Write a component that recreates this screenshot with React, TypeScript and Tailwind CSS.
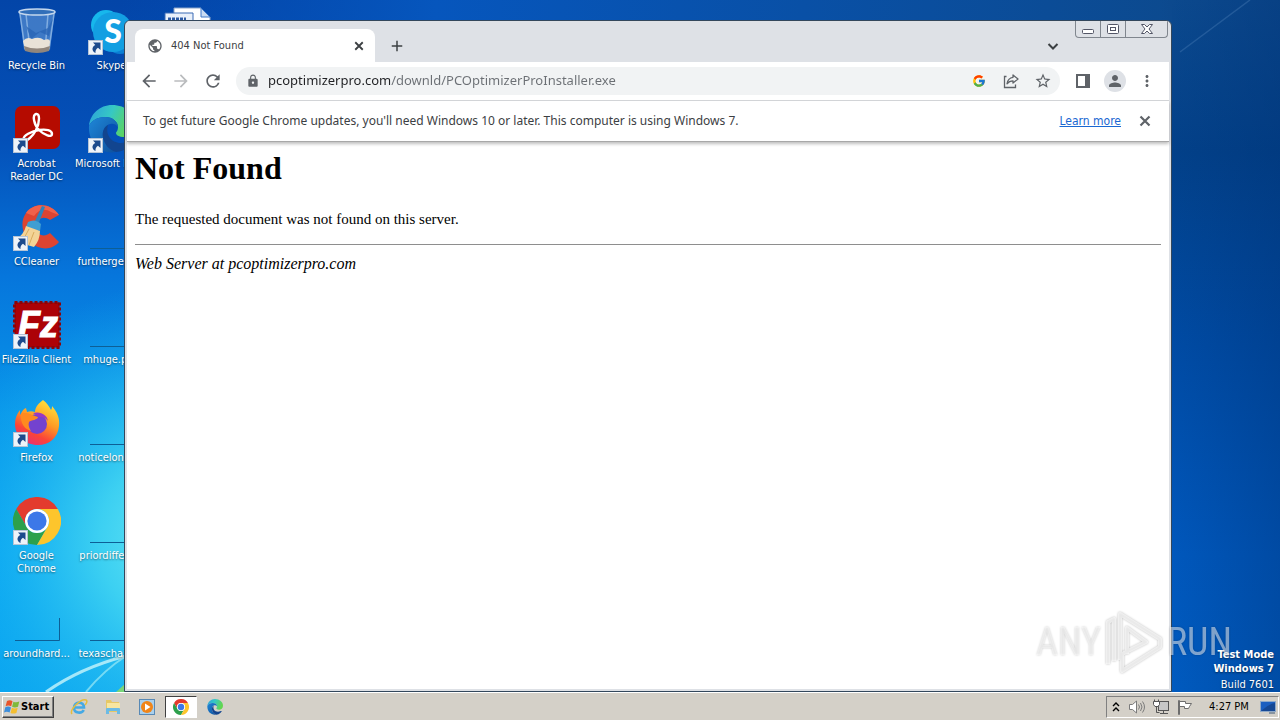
import { FunctionComponent, ReactNode, useState } from 'react';
import {
  MdAdd,
  MdArrowBack,
  MdArrowForward,
  MdLock,
  MdMoreVert,
  MdPerson,
  MdPublic,
  MdRefresh,
  MdStarBorder,
} from 'react-icons/md';
import { FcGoogle } from 'react-icons/fc';

type IconProps = { className?: string };

const CloseIcon: FunctionComponent<IconProps> = ({ className }) => (
  <svg viewBox="0 0 12 12" className={className} fill="none" stroke="currentColor" strokeWidth="2.2" aria-hidden="true">
    <path d="M1.500 1.500l9 9M10.500 1.500l-9 9" />
  </svg>
);

const ChromeLogo: FunctionComponent<IconProps> = ({ className }) => (
  <svg viewBox="0 0 48 48" className={className} aria-hidden="true">
    <path d="M24 12H44.8A24 24 0 0 0 3.2 12L13.6 30A12 12 0 0 1 24 12Z" fill="#e33b2e" />
    <path d="M13.6 30L3.2 12A24 24 0 0 0 24 48L34.4 30A12 12 0 0 1 13.6 30Z" fill="#2da04c" />
    <path d="M34.4 30L24 48A24 24 0 0 0 44.8 12H24A12 12 0 0 1 34.4 30Z" fill="#fdc52c" />
    <circle cx="24" cy="24" r="12" fill="#fff" />
    <circle cx="24" cy="24" r="9.6" fill="#3c78e8" />
  </svg>
);

const EdgeLogo: FunctionComponent<IconProps> = ({ className }) => (
  <svg viewBox="0 0 48 48" className={className} aria-hidden="true">
    <defs>
      <linearGradient id="edgeTop" x1="0" y1="0" x2="1" y2="0.3">
        <stop offset="0" stopColor="#2b9fdc" />
        <stop offset="0.5" stopColor="#36c8c4" />
        <stop offset="1" stopColor="#62d650" />
      </linearGradient>
      <linearGradient id="edgeBody" x1="0" y1="0" x2="1" y2="1">
        <stop offset="0" stopColor="#1f87d8" />
        <stop offset="1" stopColor="#0d4f9c" />
      </linearGradient>
    </defs>
    <path d="M1 21C2 9 12 0 24 0c14 0 24 9 24 20 0 8-6 12-12 12-5 0-8-2-8-4 0-1 2-2 2-6 0-5-5-10-13-10C9 12 3 16 1 21Z" fill="url(#edgeTop)" />
    <path d="M1 21c2-5 8-9 16-9 8 0 13 5 13 10-2-3-5-4-8-3-5 1-8 7-7 13 1 7 7 13 13 15C13 50 0 38 1 21Z" fill="url(#edgeBody)" />
    <path d="M15 32c-1-5 1-10 5-12-3 9 3 18 13 18 6 0 10-3 11-2 1 1-6 11-16 11-7-2-12-8-13-15Z" fill="#12458f" />
  </svg>
);

const RecycleBin: FunctionComponent<IconProps> = ({ className }) => (
  <svg viewBox="0 0 48 48" className={className} aria-hidden="true">
    <path d="M6 4L11 43Q24 48 37 43L42 4Z" fill="#5289cf" fillOpacity=".75" />
    <path d="M7 7L12 42M13 7l4 36M41 7l-5 35M35 7l-3 37" stroke="#9ec4ec" strokeWidth="1.5" opacity=".7" />
    <path d="M13 19l10 7 12-5 5-10-4 18-9-4-9 7Z" fill="#2864b4" opacity=".75" />
    <path d="M10 34q4-5 9-2 7-3 12 1 6-2 6 2l-1 7q-11 5-24 0Z" fill="#e9e2d7" />
    <path d="M11 39q13 5 26 0l-1 5q-12 4-24 0Z" fill="#91867c" />
    <ellipse cx="24" cy="5" rx="18" ry="3" fill="#326fb9" stroke="#c4d7ed" strokeWidth="1.5" />
  </svg>
);

const SkypeLogo: FunctionComponent<IconProps> = ({ className }) => (
  <svg viewBox="0 0 48 48" className={className} aria-hidden="true">
    <circle cx="18" cy="18" r="15" fill="#17b7ec" />
    <circle cx="32" cy="33" r="14" fill="#0b7fd4" />
    <circle cx="25" cy="25" r="20" fill="#139fe2" />
    <text x="25" y="36" textAnchor="middle" fill="#fff" fontFamily="Lato, sans-serif" fontWeight="900" fontSize="32">
      S
    </text>
  </svg>
);

const AcrobatLogo: FunctionComponent<IconProps> = ({ className }) => (
  <svg viewBox="0 0 48 48" className={className} aria-hidden="true">
    <rect x="2" y="1" width="45" height="43" rx="7" fill="#b50b00" />
    <path
      d="M11 34c-2-3 8-8 15-9 7-1 13 0 13 4 0 4-8 1-13-4-5-5-7-15-3-16 4-1 4 8 0 16-3 6-10 13-12 9Z"
      fill="none"
      stroke="#fff"
      strokeWidth="2.4"
      strokeLinejoin="round"
    />
  </svg>
);

const CCleanerLogo: FunctionComponent<IconProps> = ({ className }) => (
  <svg viewBox="0 0 48 48" className={className} aria-hidden="true">
    <path d="M46 12C38 0 21-1 13 10 5 21 11 39 25 44c8 3 16 1 21-5l-9-9c-6 5-14 2-14-6 0-8 7-12 14-7Z" fill="#dd4431" />
    <path d="M46 12C38 0 21-1 13 10l8 3c5-7 11-8 17-4Z" fill="#f0614a" />
    <path d="M29 3l3 1-7 18-4-2Z" fill="#2d83bd" />
    <path d="M15 19q7-4 13 2l-1 7-14-4Z" fill="#3f9ed2" />
    <path d="M13 23l14 5q0 9-6 16L1 38Q11 32 13 23Z" fill="#f3d396" />
    <path d="M16 26L9 39M21 29l-5 13" stroke="#d9ab5e" strokeWidth="1" />
  </svg>
);

const FileZillaLogo: FunctionComponent<IconProps> = ({ className }) => (
  <svg viewBox="0 0 48 48" className={className} aria-hidden="true">
    <rect x="1.5" y="1.5" width="45" height="45" fill="#ac0207" stroke="#8c0307" strokeWidth="3" strokeDasharray="3 2" />
    <text x="5" y="36" fill="#fff" stroke="#fff" fontFamily="Liberation Sans, sans-serif" fontWeight="700" fontStyle="italic" fontSize="36">
      Fz
    </text>
  </svg>
);

const FirefoxLogo: FunctionComponent<IconProps> = ({ className }) => (
  <svg viewBox="0 0 48 48" className={className} aria-hidden="true">
    <defs>
      <linearGradient id="fox" x1=".8" y1="0" x2=".3" y2="1">
        <stop offset="0" stopColor="#ffe83d" />
        <stop offset=".45" stopColor="#ff9a24" />
        <stop offset=".75" stopColor="#fb4438" />
        <stop offset="1" stopColor="#e62f76" />
      </linearGradient>
    </defs>
    <path d="M30 1c4 3 6 6 8 10 1-1 1-3 1-4 5 6 8 12 7 20C45 39 36 46 25 46 12 46 2 37 2 25c0-6 2-10 5-14v5c2-3 3-6 6-7l1 4c3-1 5-1 8 0 0-5 4-9 8-12Z" fill="url(#fox)" />
    <circle cx="24" cy="25" r="10" fill="#7342cf" />
    <path d="M20 14c8-2 14 2 15 8-3-4-6-4-9-4Z" fill="#9a37c4" />
    <path d="M8 15c4-2 8-1 11 1l6 2c0 3-7 3-9 5-1 3 0 6 2 9-6-2-11-7-10-17Z" fill="#ff8a1f" />
  </svg>
);

const BlankFile: FunctionComponent<IconProps> = ({ className }) => (
  <svg viewBox="0 0 48 48" className={className} aria-hidden="true">
    <path d="M2 45.500H46.500V23" fill="none" stroke="#0d5f96" strokeWidth="1" />
  </svg>
);

const WordFile: FunctionComponent<IconProps> = ({ className }) => (
  <svg viewBox="0 0 48 48" className={className} aria-hidden="true">
    <path d="M11 1h27l9 9v36H11Z" fill="#fff" stroke="#8aa4c8" />
    <path d="M38 1v9h9Z" fill="#c9dbf2" stroke="#3f79c9" />
    <path d="M2 6h28v16H2Z" fill="#e9f0fa" stroke="#3a6bb5" />
    <path d="M5 12h18" stroke="#2c5aa5" strokeWidth="3" strokeDasharray="3 1" />
  </svg>
);

const ShortcutArrow = () => (
  <svg viewBox="0 0 15 15" className="absolute bottom-0 left-0 size-[15px]" aria-hidden="true">
    <rect x=".5" y=".5" width="14" height="14" fill="#eef3f9" stroke="#b5c4d6" />
    <path d="M5 2.500h7.500V10L10 7.700C8 9 7.300 10.500 7.500 13 3.500 11 3.500 7 7.300 5Z" fill="#1c4a8c" />
  </svg>
);

type Shortcut = {
  label: string;
  icon: FunctionComponent<IconProps>;
  shortcut?: boolean;
};

const DESKTOP_ITEMS: Shortcut[] = [
  { label: 'Recycle Bin', icon: RecycleBin },
  { label: 'Acrobat\nReader DC', icon: AcrobatLogo, shortcut: true },
  { label: 'CCleaner', icon: CCleanerLogo, shortcut: true },
  { label: 'FileZilla Client', icon: FileZillaLogo, shortcut: true },
  { label: 'Firefox', icon: FirefoxLogo, shortcut: true },
  { label: 'Google\nChrome', icon: ChromeLogo, shortcut: true },
  { label: 'aroundhard...', icon: BlankFile },
  { label: 'Skype', icon: SkypeLogo, shortcut: true },
  { label: 'Microsoft Edge', icon: EdgeLogo, shortcut: true },
  { label: 'furthergene...', icon: BlankFile },
  { label: 'mhuge.png', icon: BlankFile },
  { label: 'noticelongs...', icon: BlankFile },
  { label: 'priordiffere...', icon: BlankFile },
  { label: 'texaschairs...', icon: BlankFile },
  { label: '', icon: WordFile },
];

const Wallpaper = () => (
  <svg viewBox="0 0 1280 692" preserveAspectRatio="none" className="absolute inset-0 size-full" aria-hidden="true">
    <defs>
      <linearGradient id="leftSky" x1="0" y1="0" x2="0" y2="1">
        <stop offset="0" stopColor="#0345a8" />
        <stop offset=".2" stopColor="#0450b8" />
        <stop offset=".4" stopColor="#0676dc" />
        <stop offset=".6" stopColor="#0896ea" />
        <stop offset=".8" stopColor="#05a2f2" />
        <stop offset="1" stopColor="#0aa5f0" />
      </linearGradient>
      <linearGradient id="rightSky" x1="0" y1="0" x2="0" y2="1">
        <stop offset="0" stopColor="#0c4a8f" />
        <stop offset=".22" stopColor="#02418a" />
        <stop offset=".5" stopColor="#004ca6" />
        <stop offset=".8" stopColor="#0059bf" />
        <stop offset="1" stopColor="#005cc2" />
      </linearGradient>
      <linearGradient id="rightShade" x1="0" y1="0" x2="1" y2="0">
        <stop offset="0" stopColor="#002f70" stopOpacity="0" />
        <stop offset="1" stopColor="#002f70" stopOpacity=".35" />
      </linearGradient>
      <linearGradient id="topBlend" x1="0" y1="0" x2="1" y2="0">
        <stop offset="0" stopColor="#0450b8" stopOpacity="0" />
        <stop offset=".3" stopColor="#0656bd" />
        <stop offset="1" stopColor="#0c4a8f" />
      </linearGradient>
      <radialGradient id="glow" gradientUnits="userSpaceOnUse" cx="190" cy="540" r="260">
        <stop offset="0" stopColor="#6fecf4" />
        <stop offset=".35" stopColor="#42d5f2" stopOpacity=".9" />
        <stop offset="1" stopColor="#12aef0" stopOpacity="0" />
      </radialGradient>
    </defs>
    <rect width="640" height="692" fill="url(#leftSky)" />
    <rect x="640" width="640" height="692" fill="url(#rightSky)" />
    <rect x="120" width="1052" height="30" fill="url(#topBlend)" />
    <rect x="1160" width="120" height="692" fill="url(#rightShade)" />
    <rect width="420" height="692" fill="url(#glow)" />
    <path d="M1180 52L1250 0" stroke="#5f8fc4" strokeWidth="1.500" opacity=".3" />
    <path d="M46 692Q80 668 126 656" fill="none" stroke="#c8f5fb" strokeWidth="3" opacity=".8" />
    <path d="M86 692Q104 670 126 656" fill="none" stroke="#9beaf5" strokeWidth="2" opacity=".7" />
    <path d="M116 692l10-9v9Z" fill="#7ad67a" />
  </svg>
);

const DesktopItem: FunctionComponent<Shortcut> = ({ label, icon: Icon, shortcut }) => (
  <button type="button" aria-label={label || 'Document'} className="flex h-[98px] w-[73px] flex-col items-center pt-[7px]">
    <span className="relative block size-12">
      <Icon className="size-12" />
      {shortcut && <ShortcutArrow />}
    </span>
    <span className="mt-1 whitespace-pre text-center text-[11px] leading-[13px] text-white text-shadow-[0_1px_2px_rgb(0_0_0_/_0.5)]">
      {label}
    </span>
  </button>
);

const ToolButton: FunctionComponent<{ label: string; children: ReactNode }> = ({ label, children }) => (
  <button type="button" aria-label={label} className="flex h-7 w-8 shrink-0 items-center justify-center text-[#5f6368]">
    {children}
  </button>
);

const TabStrip = () => (
  <div className="flex h-[41px] bg-[#dee1e6] pl-2">
    <div className="mt-2 flex h-[33px] w-60 items-center rounded-t-lg bg-white pl-3 pr-2 text-[#3c4043]">
      <MdPublic className="size-4 text-[#5f6368]" />
      <span className="ml-2 flex-1 pt-0.5 text-[11px]">404 Not Found</span>
      <button type="button" aria-label="Close tab" className="flex size-4 items-center justify-center">
        <CloseIcon className="size-2.5" />
      </button>
    </div>
    <button type="button" aria-label="New tab" className="mt-2 flex h-[33px] w-11 items-center justify-center text-[#3c4043]">
      <MdAdd className="size-[18px]" />
    </button>
    <div className="flex-1" />
    <button type="button" aria-label="Search tabs" className="mr-2 mt-2 flex h-[33px] w-7 items-center justify-center">
      <svg viewBox="0 0 12 12" className="size-3" fill="none" stroke="#3c4043" strokeWidth="2">
        <path d="M1.500 4L6 8.500 10.500 4" />
      </svg>
    </button>
    <div className="mr-px flex h-[17px] w-[93px] rounded-b border border-t-0 border-[#80868e]">
      <button type="button" aria-label="Minimize" className="flex w-[25px] items-center justify-center border-r border-[#80868e]">
        <svg viewBox="0 0 12 10" className="mt-1 h-2.5 w-3">
          <rect x=".5" y="3.500" width="11" height="4" rx="1" fill="#fff" stroke="#535666" />
        </svg>
      </button>
      <button type="button" aria-label="Maximize" className="flex w-[25px] items-center justify-center border-r border-[#80868e]">
        <svg viewBox="0 0 12 10" className="h-2.5 w-3" fill="#fff" stroke="#535666">
          <rect x=".5" y=".5" width="11" height="9" rx="1" />
          <rect x="3.500" y="3.500" width="5" height="3" />
        </svg>
      </button>
      <button type="button" aria-label="Close" className="flex flex-1 items-center justify-center">
        <svg viewBox="0 0 12 10" className="h-2.5 w-3">
          <path d="M.5.5h3L6 3 8.500.5h3L8 5l3.500 4.500h-3L6 7 3.500 9.500h-3L4 5Z" fill="#fff" stroke="#535666" />
        </svg>
      </button>
    </div>
  </div>
);

const Toolbar = () => {
  const [url, setUrl] = useState<string>('pcoptimizerpro.com/downld/PCOptimizerProInstaller.exe');

  return (
    <div className="flex h-[39px] items-center border-b border-[#d5d7da] bg-white px-1.5">
      <ToolButton label="Back">
        <MdArrowBack className="size-5" />
      </ToolButton>
      <ToolButton label="Forward">
        <MdArrowForward className="size-5 text-[#babcbe]" />
      </ToolButton>
      <ToolButton label="Reload">
        <MdRefresh className="size-5" />
      </ToolButton>
      <div className="mx-[7px] flex h-7 min-w-0 flex-1 items-center rounded-full bg-[#f1f3f4] pl-2.5 pr-px">
        <MdLock className="size-3.5 shrink-0 text-[#5f6368]" />
        <input
          aria-label="Address"
          value={url}
          onChange={(e) => setUrl(e.target.value)}
          className="ml-2 min-w-0 flex-1 bg-[linear-gradient(90deg,#202124_122px,#6b6f74_122px)] bg-clip-text font-['Noto_Sans',sans-serif] text-[13px] text-transparent outline-none"
        />
        <ToolButton label="Search with Google">
          <FcGoogle className="size-3.5" />
        </ToolButton>
        <ToolButton label="Share">
          <svg viewBox="0 0 16 16" className="size-4" fill="none" stroke="#5f6368" strokeWidth="1.300">
            <path d="M3.500 3.500h-2v11h11v-3" />
            <path d="M10 2l5 4-5 4V7.800c-3 0-4.500 1-6 3 .5-3.500 2.500-6 6-6.500Z" strokeLinejoin="round" />
          </svg>
        </ToolButton>
        <ToolButton label="Bookmark this tab">
          <MdStarBorder className="size-[18px]" />
        </ToolButton>
      </div>
      <ToolButton label="Side panel">
        <svg viewBox="0 0 14 14" className="size-3.5">
          <path d="M0 0h14v14H0ZM2 2v10h7V2Z" fill="#5f6368" fillRule="evenodd" />
        </svg>
      </ToolButton>
      <ToolButton label="Profile">
        <span className="flex size-[22px] items-center justify-center rounded-full bg-[#dee1e6]">
          <MdPerson className="size-[18px]" />
        </span>
      </ToolButton>
      <ToolButton label="Menu">
        <MdMoreVert className="size-[18px]" />
      </ToolButton>
    </div>
  );
};

const BrowserWindow = () => (
  <section
    className="
      absolute bottom-0 left-[124px] right-[108px] top-5
      flex flex-col overflow-hidden
      rounded-t-md border border-[#33475c] bg-[#dee1e6] p-0.5 pt-0
    "
  >
    <TabStrip />
    <Toolbar />
    <div className="z-10 flex h-[41px] items-center border-b border-[#a8a8a8] bg-white pl-4 pr-3 text-[12px] text-[#3c4043] shadow-[0_2px_3px_rgb(0_0_0_/_0.25)]">
      <p className="flex-1 font-['Noto_Sans',sans-serif]">
        To get future Google Chrome updates, you&apos;ll need Windows 10 or later. This computer is using Windows 7.
      </p>
      <a href="#learn-more" className="mr-3 text-[#1967d2] underline">
        Learn more
      </a>
      <button type="button" aria-label="Dismiss" className="flex size-6 items-center justify-center text-[#5f6368]">
        <CloseIcon className="size-3" />
      </button>
    </div>
    <main className="flex-1 bg-white p-2 font-['Liberation_Serif',serif] text-black">
      <h1 className="text-[32px] font-bold leading-9">Not Found</h1>
      <p className="mt-6 text-[15px] leading-[18px]">The requested document was not found on this server.</p>
      <hr className="mb-2.5 mt-4 border-[#8e8e8e]" />
      <address className="text-[16px] italic leading-[18px]">Web Server at pcoptimizerpro.com</address>
    </main>
  </section>
);

const Watermark = () => (
  <div
    className="
      absolute bottom-[18px] right-12 z-20 flex items-center gap-1
      font-['Roboto_Condensed','Liberation_Sans_Narrow',sans-serif] text-[38px] leading-[60px] text-white/50
      drop-shadow-[0_0_1px_rgb(0_0_0_/_0.4)]
    "
  >
    <span>ANY</span>
    <svg viewBox="0 0 58 64" className="h-16 w-[58px]" fill="none" stroke="#fff" strokeOpacity=".65" strokeWidth="4" strokeLinejoin="round">
      <path d="M3 54V12l6-3v42" />
      <path d="M15 50V4l40 25v8L17 61V44l24-12L22 18v26" />
    </svg>
    <span>RUN</span>
  </div>
);

const Taskbar = () => (
  <footer className="flex h-7 shrink-0 items-center border-t border-white bg-[#d4d0c8] pl-0.5 pr-px text-[11px] text-black outline outline-[#d4d0c8]">
    <button
      type="button"
      className="flex h-[22px] w-[52px] items-center gap-px border border-b-[#404040] border-l-white border-r-[#404040] border-t-white pl-px font-bold shadow-[inset_-1px_-1px_#808080]"
    >
      <svg viewBox="0 0 16 16" className="size-4 shrink-0" aria-hidden="true">
        <path d="M3 2q3-1.500 5.500.2L7.200 7.300Q4.500 5.800 1.600 7.200Z" fill="#e8542a" />
        <path d="M9.400 2.700Q12 4 15.300 2.600L14 7.700q-3.200 1.400-5.900 0Z" fill="#7fb93c" />
        <path d="M1.300 8.200q3-1.300 5.700.2l-1.400 5.200Q3 12.200 0 13.400Z" fill="#3d8edb" />
        <path d="M7.900 8.800q2.700 1.300 5.800 0l-1.300 5.100q-3.200 1.400-5.900 0Z" fill="#f4be2f" />
      </svg>
      <span className="pt-0.5">Start</span>
    </button>
    <nav className="ml-2 flex items-center">
      <button type="button" aria-label="Internet Explorer" className="flex h-[22px] w-[34px] items-center justify-center">
        <svg viewBox="0 0 18 18" className="size-[18px]" fill="none">
          <path d="M4.500 9.500h9.500C14 3 4 3 4 9.800c0 6 8 6 9.700 2.200" stroke="#45a9e4" strokeWidth="2.600" />
          <path d="M2 16C-1 12 11 0 16 2c2 1 0 4-1 5" stroke="#e6bd3c" strokeWidth="1.500" />
        </svg>
      </button>
      <button type="button" aria-label="Windows Explorer" className="flex h-[22px] w-[34px] items-center justify-center">
        <svg viewBox="0 0 18 18" className="size-[18px]">
          <path d="M2 2h5l1 2h7v10H2Z" fill="#e6c866" />
          <path d="M3 5h13v8H3Z" fill="#f7e6a0" />
          <path d="M2 16v-5q0-1 1-1h12q1 0 1 1v5h-3v-3H5v3Z" fill="#6cbbe5" />
        </svg>
      </button>
      <button type="button" aria-label="Media Player" className="flex h-[22px] w-[34px] items-center justify-center">
        <svg viewBox="0 0 16 16" className="size-4">
          <rect x=".5" y=".5" width="15" height="15" fill="#a9d0ed" stroke="#5889b5" />
          <circle cx="8" cy="8" r="6" fill="#f08519" />
          <path d="M6 4.500v7L11.500 8Z" fill="#fff" />
        </svg>
      </button>
      <button
        type="button"
        aria-label="Google Chrome"
        className="ml-px flex h-[22px] w-8 items-center justify-center border border-b-white border-l-[#404040] border-r-white border-t-[#404040] bg-white"
      >
        <ChromeLogo className="size-4" />
      </button>
      <button type="button" aria-label="Microsoft Edge" className="ml-px flex h-[22px] w-[34px] items-center justify-center">
        <EdgeLogo className="size-4" />
      </button>
    </nav>
    <div className="flex-1" />
    <div className="flex h-[22px] w-[173px] items-center border border-b-white border-l-[#808080] border-r-white border-t-[#808080] pl-[3px]">
      <button type="button" aria-label="Show hidden icons" className="flex w-3 justify-center">
        <svg viewBox="0 0 8 10" className="h-2.5 w-2" fill="none" stroke="#000" strokeWidth="1.400">
          <path d="M1 4l3-3 3 3M1 9l3-3 3 3" />
        </svg>
      </button>
      <button type="button" aria-label="Volume" className="ml-[5px] flex w-5 justify-center">
        <svg viewBox="0 0 16 16" className="size-4" fill="none" stroke="#7b7b7b">
          <path d="M.5 5.500h3L7.500 2v12l-4-3.500h-3Z" fill="#fff" />
          <path d="M9.500 5.500q2 2.500 0 5M11.500 4q3 4 0 8M13.500 2.500q4 5.500 0 11" />
        </svg>
      </button>
      <button type="button" aria-label="Network" className="ml-1 flex w-5 justify-center">
        <svg viewBox="0 0 16 16" className="size-4" fill="#fff" stroke="#555">
          <rect x="5.500" y="2.500" width="10" height="9" fill="#c7c7c7" />
          <path d="M7 14.500h8M10.500 11.500v3M1.500.5v3M5.500.5v3M3.500 7.500v6h3" fill="none" />
          <path d="M.5 2.500h6v3l-1.500 2H2L.5 5.500Z" />
        </svg>
      </button>
      <button type="button" aria-label="Action Center" className="ml-1 flex w-5 justify-center">
        <svg viewBox="0 0 16 16" className="size-4" fill="#fff" stroke="#6d6d6d">
          <path d="M1.500 1.500h1v14h-1ZM2.500 2.500h6v2h6l-2 3-1 2h-4v-2h-5Z" />
        </svg>
      </button>
      <time className="ml-3.5 flex-1 whitespace-nowrap pt-0.5">4:27 PM</time>
      <button type="button" aria-label="Show desktop" className="mr-0.5 flex w-4 justify-center">
        <svg viewBox="0 0 16 14" className="h-3.5 w-4">
          <rect x=".5" y="1.500" width="15" height="10" fill="#1c5fc0" stroke="#8fa9c8" />
          <path d="M1 11Q8 4 15 3v8Z" fill="#164894" />
          <path d="M9 13h6" stroke="#3c5878" />
        </svg>
      </button>
    </div>
  </footer>
);

const App: FunctionComponent = () => (
  <div className="flex h-screen flex-col overflow-hidden bg-[#004ca6] font-['DejaVu_Sans_Condensed','Noto_Sans',sans-serif]">
    <div className="relative min-h-0 flex-1">
      <Wallpaper />
      <div className="relative grid w-max grid-flow-col grid-rows-[repeat(7,98px)] gap-x-0.5">
        {DESKTOP_ITEMS.map((item, index) => (
          <DesktopItem key={item.label || index} {...item} />
        ))}
      </div>
      <div className="absolute bottom-0 right-1.5 text-right text-[11px] leading-[14px] text-white text-shadow-[0_1px_2px_rgb(0_0_0_/_0.5)]">
        <p className="font-bold">Test Mode</p>
        <p className="font-bold">Windows 7</p>
        <p className="mt-0.5">Build 7601</p>
      </div>
      <BrowserWindow />
      <Watermark />
    </div>
    <Taskbar />
  </div>
);

export default App;
